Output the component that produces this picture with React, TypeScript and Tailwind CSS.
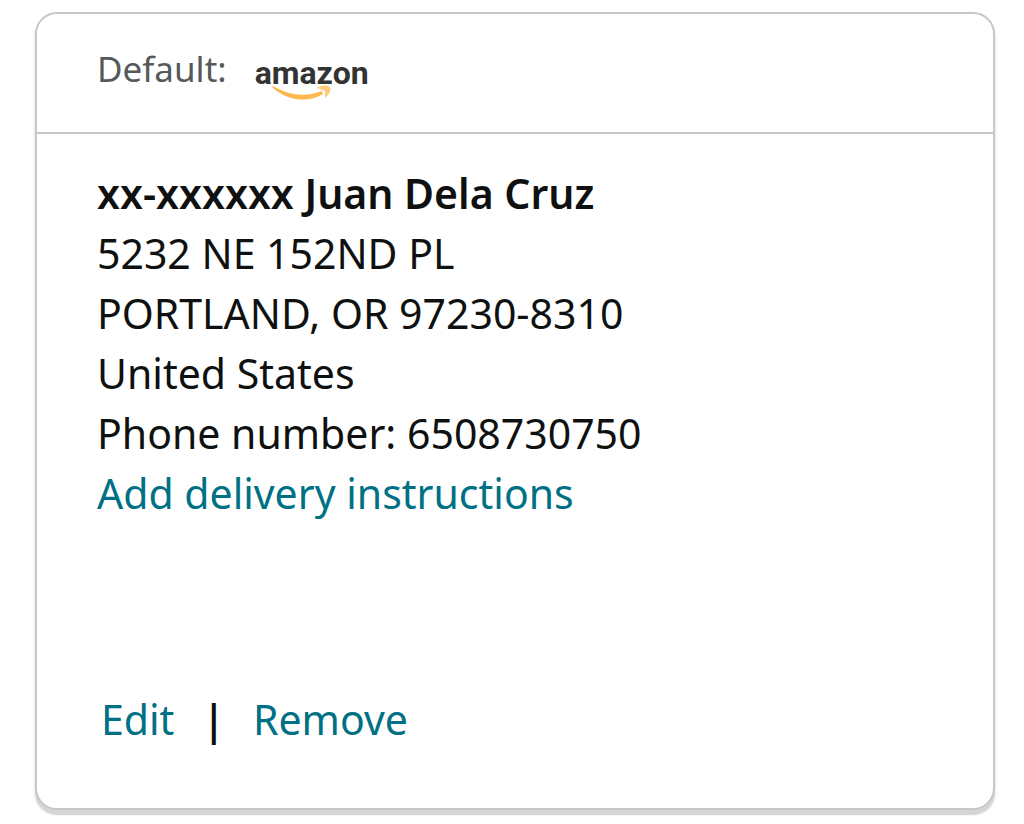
import React from 'react';

const addressLines = [
  '5232 NE 152ND PL',
  'PORTLAND, OR 97230-8310',
  'United States',
  'Phone number: 6508730750',
];

const AmazonLogo = () => (
  <div className="relative pt-2 font-[Roboto,sans-serif] font-bold text-[#333333]">
    <span className="block text-[32px] leading-10">amazon</span>
    <svg className="absolute left-4 top-10 h-4 w-16" viewBox="0 0 64 16" fill="none" aria-hidden="true">
      <path d="M1 2C14 15 36 19 52 9L51 6C36 12 18 11 2 1Z" fill="#ffb84d" />
      <path d="M46 3C51 0 56 0 59 2C60 6 58 10 54 13L54 6Z" fill="#ffca7a" />
    </svg>
  </div>
);

const AddressCard = () => {
  return (
    <section className="rounded-[22px] border-2 border-[#c7c7c7] bg-white shadow-[0_5px_1px_#d5d5d5,0_4px_3px_1px_#eeeeee]">
      {/* Default address header */}
      <header className="flex h-[120px] items-center gap-7 border-b-2 border-[#c7c7c7] px-15 pb-2">
        <span className="text-[35px] leading-10 text-[#565959]">Default:</span>
        <AmazonLogo />
      </header>

      {/* Address */}
      <div className="px-15 pt-[29px] text-[41px] leading-[60px]">
        <h2 className="font-semibold">xx-xxxxxx Juan Dela Cruz</h2>
        <ul>
          {addressLines.map((line) => (
            <li key={line}>{line}</li>
          ))}
        </ul>
        <a href="#instructions" className="text-[#007185]">Add delivery instructions</a>
      </div>

      {/* Actions */}
      <div className="flex items-center px-16 pb-[59px] pt-[166px] text-[41px] leading-[60px]">
        <a href="#edit" className="text-[#007185]">Edit</a>
        <span className="px-7 font-semibold">|</span>
        <a href="#remove" className="text-[#007185]">Remove</a>
      </div>
    </section>
  );
};

const App = () => (
  <main className="min-h-screen bg-white pb-3 pl-[35px] pr-[29px] pt-3 font-['Noto_Sans','Open_Sans',sans-serif] text-[#0f1111]">
    <AddressCard />
  </main>
);

export default App;
